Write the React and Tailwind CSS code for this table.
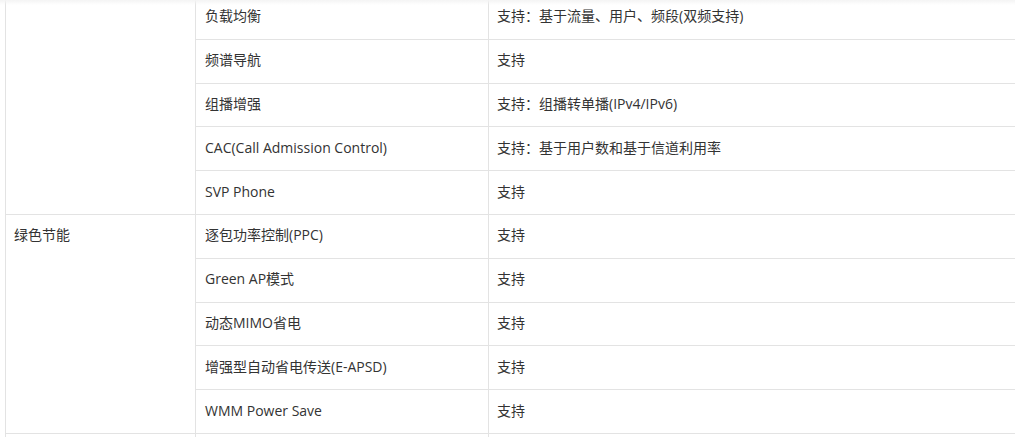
import React from 'react';

// Spec table (scrolled view): feature group / feature / support detail
const groups = [
    {
        label: '',
        rows: [
            ['负载均衡', '支持：基于流量、用户、频段(双频支持)'],
            ['频谱导航', '支持'],
            ['组播增强', '支持：组播转单播(IPv4/IPv6)'],
            ['CAC(Call Admission Control)', '支持：基于用户数和基于信道利用率'],
            ['SVP Phone', '支持'],
        ],
    },
    {
        label: '绿色节能',
        rows: [
            ['逐包功率控制(PPC)', '支持'],
            ['Green AP模式', '支持'],
            ['动态MIMO省电', '支持'],
            ['增强型自动省电传送(E-APSD)', '支持'],
            ['WMM Power Save', '支持'],
        ],
    },
    {
        label: '',
        rows: [['', '']],
    },
];

const cell = 'border border-[#e3e3e3] px-[8px] pb-[3px] h-[43.8px] align-middle';

const App = () => {
    return (
        <div
            className="relative h-[437px] w-[1015px] overflow-hidden bg-white text-[14px] text-[#333]"
            style={{ fontFamily: '"Open Sans", "Noto Sans CJK SC", sans-serif' }}
        >
            <div className="pl-[5px] -mt-[5px]">
                <table className="w-[1012px] table-fixed border-collapse">
                    <colgroup>
                        <col className="w-[190px]" />
                        <col className="w-[293px]" />
                        <col />
                    </colgroup>
                    <tbody>
                        {groups.map((group, gi) =>
                            group.rows.map((row, ri) => (
                                <tr key={`${gi}-${ri}`}>
                                    {ri === 0 && (
                                        <td
                                            rowSpan={group.rows.length}
                                            className="border border-[#e3e3e3] px-[8px] pt-[9px] align-top leading-[21px]"
                                        >
                                            {group.label}
                                        </td>
                                    )}
                                    <td className={`${cell} pl-[9px]`}>{row[0]}</td>
                                    <td className={cell}>{row[1]}</td>
                                </tr>
                            ))
                        )}
                    </tbody>
                </table>
            </div>
            <div className="pointer-events-none absolute inset-x-0 top-0 h-[5px] bg-gradient-to-b from-[#f4f4f4] to-transparent" />
        </div>
    );
};

export default App;
